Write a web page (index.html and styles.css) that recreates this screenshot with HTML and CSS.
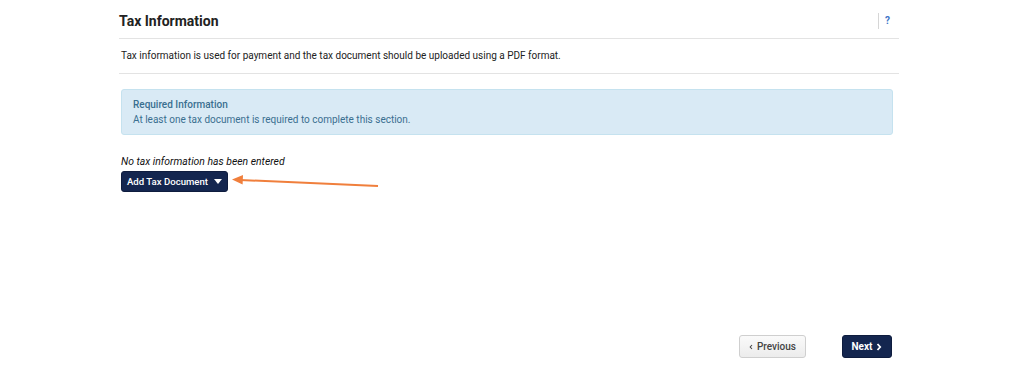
FILE: index.html
```html
<!DOCTYPE html>
<html lang="en">
<head>
  <meta charset="UTF-8">
  <meta name="viewport" content="width=device-width, initial-scale=1.0">
  <title>Tax Information</title>
  <link rel="stylesheet" href="styles.css">
</head>
<body>
  <div class="page">
    <!-- Encabezado de la sección -->
    <div class="section-header">
      <h2>Tax Information</h2>
      <a class="help" href="#">?</a>
    </div>

    <p class="intro">Tax information is used for payment and the tax document should be uploaded using a PDF format.</p>

    <div class="alert">
      <div class="alert-title">Required Information</div>
      <div>At least one tax document is required to complete this section.</div>
    </div>

    <p class="empty">No tax information has been entered</p>
    <div class="add-wrap">
      <button class="btn btn-primary btn-add">Add Tax Document <span class="caret"></span></button>
      <svg class="pointer" width="152" height="20" viewBox="0 0 152 20">
        <line x1="148" y1="14" x2="10" y2="8" stroke="#f07f3c" stroke-width="2"></line>
        <polygon points="2,7.6 13,3 12.6,12.6" fill="#f07f3c"></polygon>
      </svg>
    </div>

    <div class="footer">
      <button class="btn btn-default">
        <svg class="chev" width="6" height="8" viewBox="0 0 6 8"><path d="M4.5 1 L1.8 4 L4.5 7" fill="none" stroke="currentColor" stroke-width="1.6"></path></svg>
        Previous
      </button>
      <button class="btn btn-primary btn-next">
        Next
        <svg class="chev" width="6" height="8" viewBox="0 0 6 8"><path d="M1.5 1 L4.2 4 L1.5 7" fill="none" stroke="currentColor" stroke-width="1.8"></path></svg>
      </button>
    </div>
  </div>
</body>
</html>
```

FILE: styles.css
```css
body {
  margin: 0;
  font-family: Roboto, "Liberation Sans", Arial, sans-serif;
  color: #222;
  background: #fff;
}

.page {
  width: 780px;
  margin-left: 119px;
  height: 373px;
  display: flex;
  flex-direction: column;
}

.section-header {
  display: flex;
  align-items: center;
  justify-content: space-between;
  height: 39px;
  border-bottom: 1px solid #e3e3e3;
  box-sizing: border-box;
  padding-top: 3px;
}

.section-header h2 {
  margin: 0;
  font-size: 14px;
  font-weight: 700;
  color: #222;
}

.help {
  border-left: 1px solid #d6d6d6;
  padding: 2px 6px 2px 6px;
  margin-right: 3px;
  font-size: 10px;
  font-weight: 700;
  color: #3b73c8;
  text-decoration: none;
  line-height: 12px;
}

.intro {
  margin: 0;
  padding: 11px 2px 0;
  height: 35px;
  box-sizing: border-box;
  font-size: 10px;
  border-bottom: 1px solid #e3e3e3;
}

.alert {
  margin: 15px 6px 0 2px;
  padding: 7px 11px 7px;
  background: #d9eaf5;
  border: 1px solid #c5e2ef;
  border-radius: 3px;
  color: #3a6f90;
  font-size: 10px;
  line-height: 15px;
}

.alert-title {
  font-weight: 500;
}

.empty {
  margin: 20px 0 0 2px;
  font-size: 10.4px;
  font-style: italic;
  color: #111;
}

.add-wrap {
  display: flex;
  align-items: flex-start;
  margin: 3px 0 0 2px;
}

.btn {
  font-family: Roboto, "Liberation Sans", Arial, sans-serif;
  font-size: 10px;
  font-weight: 500;
  border-radius: 3px;
  cursor: pointer;
  box-sizing: border-box;
  height: 21px;
  display: inline-flex;
  align-items: center;
  justify-content: center;
  gap: 4px;
  white-space: nowrap;
}

.btn-primary {
  background: #14264f;
  color: #fff;
  border: 1px solid #0e1c3e;
  padding: 0 6px;
}

.btn-add {
  width: 107px;
  font-size: 9.6px;
  gap: 5px;
}

.caret {
  display: inline-block;
  width: 0;
  height: 0;
  margin-left: 1px;
  border-left: 4px solid transparent;
  border-right: 4px solid transparent;
  border-top: 5px solid #fff;
}

.pointer {
  margin: 1px 0 0 2px;
}

.footer {
  margin-top: auto;
  margin-bottom: 15px;
  display: flex;
  justify-content: flex-end;
  gap: 36px;
  padding-right: 7px;
}

.btn-default {
  background: linear-gradient(#fafafa, #ececec);
  color: #444;
  border: 1px solid #cfcfcf;
  padding: 0 9px;
  width: 67px;
  height: 23px;
}

.btn-next {
  width: 50px;
  height: 23px;
  font-weight: 700;
}
```
